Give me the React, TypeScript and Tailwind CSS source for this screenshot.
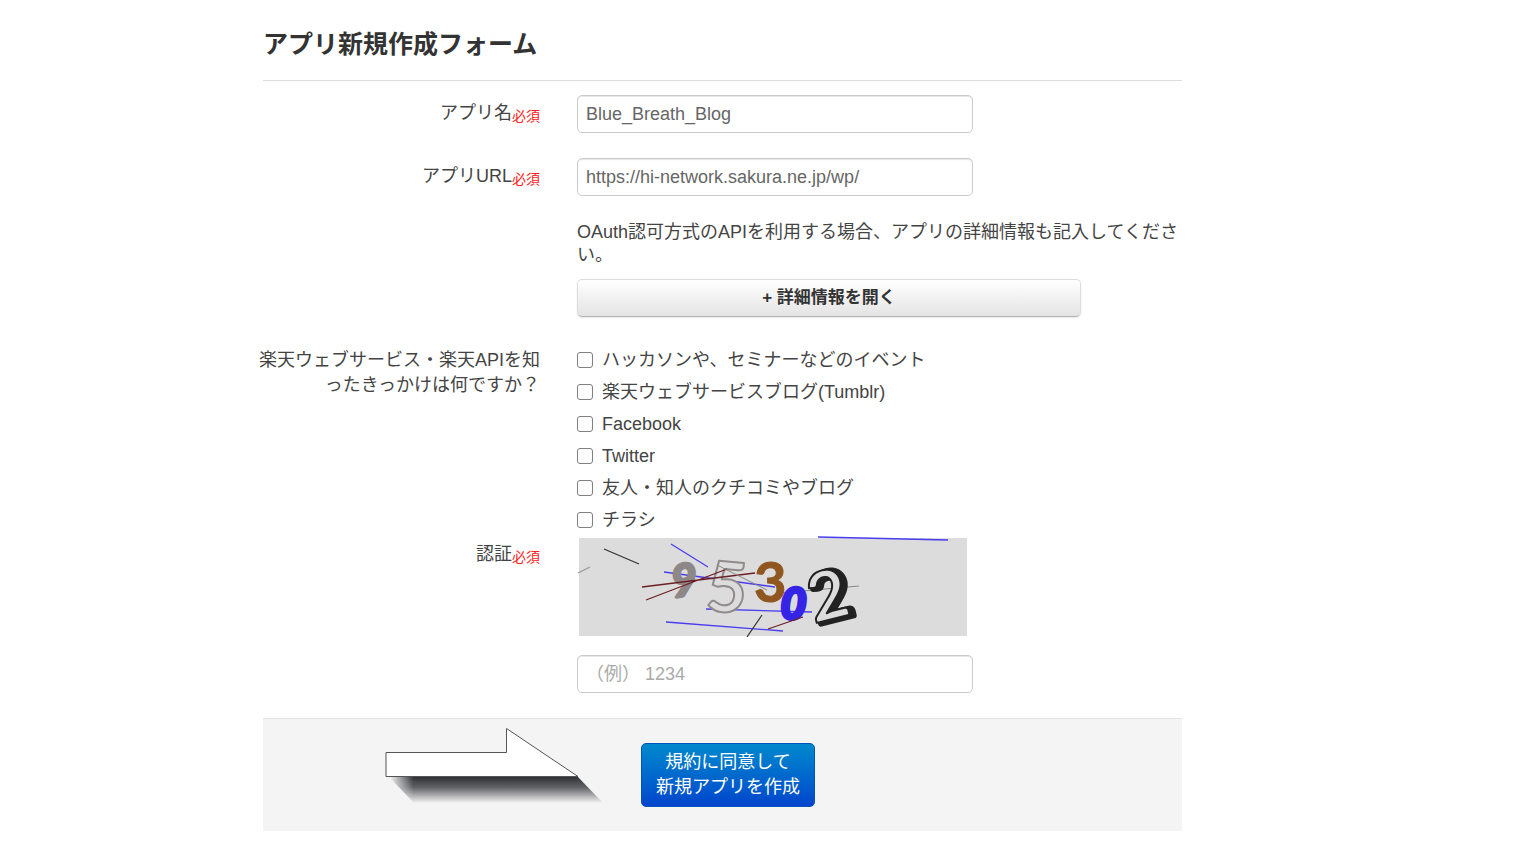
import type { ReactNode } from "react";

const sources = [
  "ハッカソンや、セミナーなどのイベント",
  "楽天ウェブサービスブログ(Tumblr)",
  "Facebook",
  "Twitter",
  "友人・知人のクチコミやブログ",
  "チラシ",
];

const inputClass =
  "block h-[38px] w-full max-w-[396px] rounded-[5px] border border-[#ccc] bg-white px-2 text-[18px] text-[#666] shadow-[inset_0_1px_1px_rgba(0,0,0,0.1)] outline-none placeholder:text-[#aaa]";

function Required() {
  return <span className="align-[-2px] text-[14px] leading-none text-[#f22]">必須</span>;
}

interface RowProps {
  label?: ReactNode;
  children: ReactNode;
}

function Row({ label, children }: RowProps) {
  return (
    <div className="flex gap-[37px]">
      <div className="-ml-1 w-[281px] shrink-0 pt-[6px] text-right leading-[25px]">
        {label}
      </div>
      <div className="min-w-0 flex-1">{children}</div>
    </div>
  );
}

function Captcha() {
  return (
    <svg width="391" height="102" viewBox="0 0 391 102" role="img" aria-label="認証画像">
      <rect x="2" y="2" width="388" height="98" fill="#dcdcdc" />
      <g fill="none" strokeWidth="1.3">
        <path d="M1 37 13 31" stroke="#999" />
        <path d="M27 13 62 28" stroke="#333" />
        <path d="M94 8 131 31M87 36 198 51M129 73 235 76M89 86 206 95M241 1 371 4" stroke="#4a3df0" />
        <path d="M203 57 282 50" stroke="#888" strokeWidth="1" />
      </g>
      <g fontFamily="Lato, 'Liberation Sans', sans-serif" fontWeight="700" strokeLinejoin="round">
        <text
          x="94"
          y="60"
          fontSize="45"
          fontStyle="italic"
          fill="#8d8787"
          stroke="#8d8787"
          strokeWidth="3"
          transform="rotate(-6 108 44)"
        >
          9
        </text>
        <text
          x="130"
          y="76"
          fontSize="70"
          fill="#dcdcdc"
          stroke="#918b8b"
          strokeWidth="2"
          transform="rotate(5 150 50)"
        >
          5
        </text>
        <text x="177" y="66" fontSize="56" fill="#8f571f" stroke="#8f571f">3</text>
        <text
          x="204"
          y="83"
          fontSize="43"
          fontStyle="italic"
          fill="#3524e6"
          stroke="#3524e6"
          strokeWidth="4"
          transform="rotate(4 218 67)"
        >
          0
        </text>
        {/* the last digit is hollow, with its own heavy shadow */}
        <g transform="rotate(-14 252 60)" fontSize="68">
          <text
            x="235"
            y="85"
            fill="#222"
            stroke="#222"
            strokeWidth="6"
          >
            2
          </text>
          <text x="231" y="83" fill="#dcdcdc" stroke="#222" strokeWidth="2">2</text>
        </g>
      </g>
      <g fill="none" strokeWidth="1.3">
        <path d="M65 51 178 37M69 64 150 33M191 93 226 81" stroke="#6b1f24" />
        <path d="M140 29 190 54" stroke="#888" strokeWidth="1" />
        <path d="M170 101 185 79" stroke="#333" />
      </g>
    </svg>
  );
}

function Arrow() {
  return (
    <svg
      className="absolute top-[9px] left-[122px]"
      width="220"
      height="78"
      viewBox="0 0 220 78"
      aria-hidden="true"
    >
      <defs>
        <linearGradient id="shade" x1="0" y1="0" x2="0" y2="1">
          <stop offset="0" stopColor="#303135" />
          <stop offset="0.4" stopColor="#303135" stopOpacity="0.75" />
          <stop offset="1" stopColor="#303135" stopOpacity="0" />
        </linearGradient>
        <linearGradient id="edge" gradientUnits="userSpaceOnUse" x1="5" y1="0" x2="218" y2="0">
          <stop offset="0" stopColor="#fff" stopOpacity="0" />
          <stop offset="0.11" stopColor="#fff" />
          <stop offset="1" stopColor="#fff" />
        </linearGradient>
        <mask id="fade">
          <rect width="220" height="78" fill="url(#edge)" />
        </mask>
      </defs>
      <path d="M4 49 29 75H218L193 49Z" fill="url(#shade)" mask="url(#fade)" />
      <path d="M1 24.500H121.500V.5L193 48.500H1Z" fill="#fff" stroke="#555" />
    </svg>
  );
}

export default function App() {
  return (
    <main className="min-h-screen bg-white font-['Liberation_Sans','Noto_Sans_CJK_JP',sans-serif] text-[18px] text-[#444]">
      <form
        className="ml-[263px] max-w-[919px]"
        onSubmit={(e) => e.preventDefault()}
      >
        <h1 className="border-b border-[#ddd] pt-6 pb-4 text-[25px] leading-10 font-bold text-[#333]">
          アプリ新規作成フォーム
        </h1>

        <div className="flex flex-col gap-[25px] pt-[14px]">
          <Row label={<label htmlFor="name">アプリ名<Required /></label>}>
            <input id="name" type="text" defaultValue="Blue_Breath_Blog" className={inputClass} />
          </Row>

          <Row label={<label htmlFor="url">アプリURL<Required /></label>}>
            <input
              id="url"
              type="text"
              defaultValue="https://hi-network.sakura.ne.jp/wp/"
              className={inputClass}
            />
          </Row>

          <Row>
            <p className="leading-[23px]">
              OAuth認可方式のAPIを利用する場合、アプリの詳細情報も記入してください。
            </p>
            <button
              type="button"
              className="mt-3 h-[38px] w-full max-w-[504px] rounded-[5px] border border-[#ddd] border-b-[#b3b3b3] bg-linear-to-b from-white to-[#e4e4e4] text-[17px] font-bold text-[#333] shadow-[0_1px_2px_rgba(0,0,0,0.1)]"
            >
              + 詳細情報を開く
            </button>
          </Row>

          <div>
            <Row
              label={<span id="source">楽天ウェブサービス・楽天APIを知ったきっかけは何ですか？</span>}
            >
              <div role="group" aria-labelledby="source" className="pt-0.5">
                {sources.map((source) => (
                  <label key={source} className="flex h-8 items-center gap-[9px]">
                    <input
                      type="checkbox"
                      className="size-4 shrink-0 appearance-none rounded-[3px] border border-[#808080] bg-white checked:bg-blue-600"
                    />
                    <span>{source}</span>
                  </label>
                ))}
              </div>
            </Row>

            <Row label={<label htmlFor="captcha">認証<Required /></label>}>
              <Captcha />
              <input
                id="captcha"
                type="text"
                placeholder="（例） 1234"
                className={`mt-[17px] ${inputClass}`}
              />
            </Row>
          </div>
        </div>

        <div className="relative mt-[25px] border-t border-[#e5e5e5] bg-[#f4f4f4] py-6">
          <Arrow />
          <button
            type="submit"
            className="ml-[378px] block rounded-[5px] border border-[#0055bb] bg-linear-to-b from-[#0088cc] to-[#0044cc] px-[14px] py-[6px] leading-[25px] text-white"
          >
            規約に同意して
            <br />
            新規アプリを作成
          </button>
        </div>
      </form>
    </main>
  );
}
